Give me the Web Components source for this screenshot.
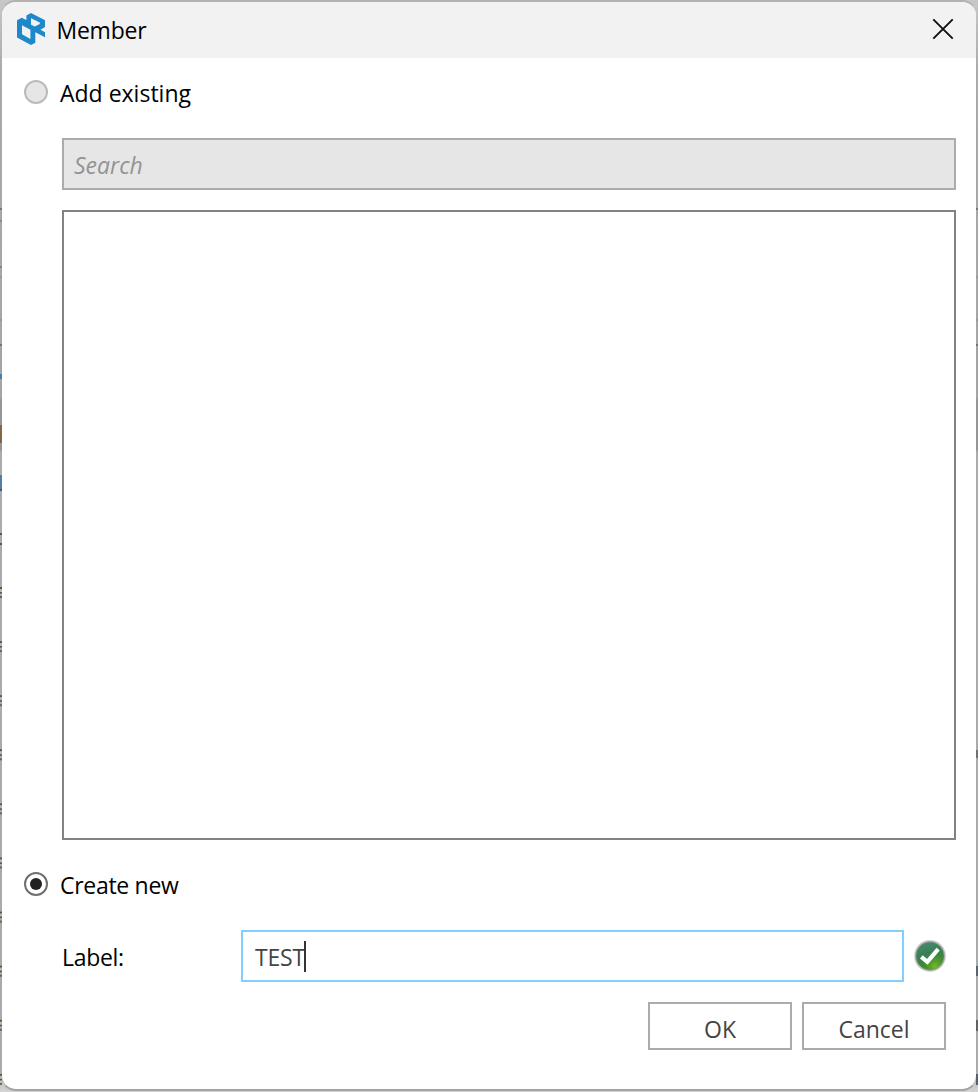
<!DOCTYPE html>
<html lang="en">
<head>
<meta charset="utf-8">
<title>Member</title>
<style>
html,body{margin:0;height:100%;overflow:hidden}
body{font-family:"Open Sans","Noto Sans",sans-serif;font-size:23px;color:#000}
</style>
</head>
<body>
<member-dialog></member-dialog>
<script>
const define = (name, html) => customElements.define(name, class extends HTMLElement {
  constructor() {
    super();
    const t = document.createElement('template');
    t.innerHTML = html;
    this.attachShadow({mode: 'open'}).append(t.content.cloneNode(true));
  }
});

define('app-logo', `<style>:host{display:block;width:28px;height:32px}svg{display:block}</style>
<svg width="28" height="32" viewBox="0 0 28 32"><path fill="#1e88cb" fill-rule="evenodd" d="M14 0 28 7.300V14L23.500 16.700 28 19.200V24.300L18.300 19.200V29.700L14 32 0 24.500V7.300L4.700 4.700 9.400 7V2.500ZM14 5.200V11.800L17.800 13.600 22.800 11V9.600ZM5 12.200V21.300L13.400 26V16.700Z"/></svg>`);

define('title-bar', `<style>
:host{display:flex;align-items:center;height:56px;flex:none;background:#f2f2f2;padding:0 22px 0 15px;box-sizing:border-box}
app-logo{margin-top:-3px}
span{margin-left:11.500px;flex:1;line-height:32px;letter-spacing:-.25px}
svg{margin-top:-2px}
</style><app-logo></app-logo><span><slot></slot></span>
<svg width="22" height="22" viewBox="0 0 22 22"><path d="M1.300 1.300 20.700 20.700M20.700 1.300 1.300 20.700" stroke="#111" stroke-width="1.900" fill="none"/></svg>`);

define('radio-option', `<style>
:host{display:flex;align-items:center;height:32px;flex:none}
i{box-sizing:border-box;width:24px;height:24px;border:2px solid #bbb;background:#e6e6e6;border-radius:50%;display:grid;place-items:center;margin-top:-2px}
:host([checked]) i{border-color:#707070;background:#fff}
:host([checked]) i::after{content:"";width:12px;height:12px;border-radius:50%;background:#222}
:host([checked]) span{letter-spacing:-.3px}
span{margin-left:12px;line-height:32px;margin-top:-1px}
</style><i></i><span><slot></slot></span>`);

define('search-box', `<style>
:host{display:flex;align-items:center;box-sizing:border-box;height:52px;flex:none;border:2px solid #ababab;background:#e6e6e6;color:#939393;font-style:italic;padding:1px 0 0 10px}
</style><slot></slot>`);

define('result-list', `<style>:host{display:block;box-sizing:border-box;height:630px;flex:none;border:2px solid #828282;background:#fff}</style>`);

define('text-field', `<style>
:host{display:flex;align-items:center;box-sizing:border-box;height:52px;width:663px;border:2px solid #80cfff;background:#fff;color:#444;padding-left:12px}
span{margin-top:2px;letter-spacing:-.2px}
i{width:2px;height:31px;background:#333;margin-left:-1px}
</style><span><slot></slot></span><i></i>`);

define('valid-icon', `<style>:host{display:block;width:32px;height:32px}svg{display:block}</style>
<svg width="32" height="32" viewBox="0 0 32 32"><defs>
<linearGradient id="g" x1="0" y1="0" x2=".3" y2="1"><stop offset="0" stop-color="#4b8a74"/><stop offset=".5" stop-color="#388052"/><stop offset="1" stop-color="#3c8c28"/></linearGradient>
<radialGradient id="h" cx=".68" cy=".88" r=".5"><stop offset="0" stop-color="#79b827"/><stop offset="1" stop-color="#4c9a2b" stop-opacity="0"/></radialGradient></defs>
<circle cx="16" cy="16" r="15.900" fill="#d4d4d4"/><circle cx="16" cy="16" r="15" fill="#a2aaa4"/><circle cx="16" cy="16" r="13.800" fill="url(#g)"/><circle cx="16" cy="16" r="13.800" fill="url(#h)"/>
<path d="M7.300 16.800 13.300 21.800 24.200 9.200" fill="none" stroke="#fff" stroke-width="4.200"/></svg>`);

define('dialog-button', `<style>
:host{display:flex;align-items:center;justify-content:center;box-sizing:border-box;width:144px;height:48px;border:2px solid #ababab;background:#fff;color:#444}
span{margin-top:6px}
</style><span><slot></slot></span>`);

define('window-backdrop', `<style>
:host{display:block;position:absolute;inset:0;background:linear-gradient(#c8c8c8 0,#aaa 70px,#a4a4a4 398px,#969696 400px,#969696 450px,#ababab 452px,#aaa 1070px,#d5d5d5 1092px)}
svg{display:block}
</style><svg width="978" height="1092"></svg>`);

define('member-dialog', `<style>
:host{display:block;position:relative;width:978px;height:1092px;overflow:hidden}
.window{position:relative;box-sizing:border-box;width:978px;height:1091px;border:2px solid #b2b2b2;border-left-color:transparent;border-right-color:transparent;border-bottom-color:#a4a4a4;border-radius:16px;background:#fff;background-clip:padding-box;display:flex;flex-direction:column;overflow:hidden}
main{padding:19px 20px 0 22px;display:flex;flex-direction:column}
search-box{margin:29px 0 20px 38px}
result-list{margin-left:38px}
.new{margin-top:29px}
.row{display:flex;align-items:center;margin-top:29px;padding-left:38px}
.row label{width:179px;margin-top:2px;letter-spacing:-.3px}
valid-icon{margin-left:10px}
.actions{display:flex;justify-content:flex-end;gap:10px;margin-top:20px;padding-right:10px}
</style>
<window-backdrop></window-backdrop>
<div class="window"><title-bar>Member</title-bar>
<main><radio-option>Add existing</radio-option><search-box>Search</search-box><result-list></result-list>
<radio-option class="new" checked>Create new</radio-option>
<div class="row"><label>Label:</label><text-field>TEST</text-field><valid-icon></valid-icon></div>
<div class="actions"><dialog-button>OK</dialog-button><dialog-button>Cancel</dialog-button></div></main></div>`);

// Slivers of the window underneath, visible along both edges.
for (const d of document.querySelectorAll('member-dialog')) {
  const svg = d.shadowRoot.querySelector('window-backdrop').shadowRoot.querySelector('svg');
  const mark = (x, y, h, c) => {
    const r = document.createElementNS('http://www.w3.org/2000/svg', 'rect');
    for (const [k, v] of Object.entries({x, y, width: 2, height: h, fill: c})) r.setAttribute(k, v);
    svg.append(r);
  };
  for (const [y, h, c] of [[208,2,'#747474'],[220,2,'#8a8a8a'],[266,2,'#858585'],[276,2,'#999'],[319,2,'#999'],[344,2,'#747474'],[374,5,'#4c7fa8'],[425,18,'#80684b'],[475,14,'#527ea4'],[489,2,'#555'],[533,2,'#555'],[543,2,'#555']]) mark(0, y, h, c);
  for (let y = 587; y < 1092; y += 54.1) { mark(0, y, 2, '#555'); mark(0, y+2, 3, '#c6b58d'); mark(0, y+5, 1.5, '#4c5568'); mark(0, y+9, 2, '#666'); }
  for (const [y, h, c] of [[208,2,'#747474'],[276,2,'#999'],[319,2,'#999'],[344,2,'#747474'],[750,8,'#707070'],[966,10,'#566574'],[1020,11,'#665f66'],[1074,11,'#555f70']]) mark(976, y, h, c);
}
</script>
</body>
</html>
